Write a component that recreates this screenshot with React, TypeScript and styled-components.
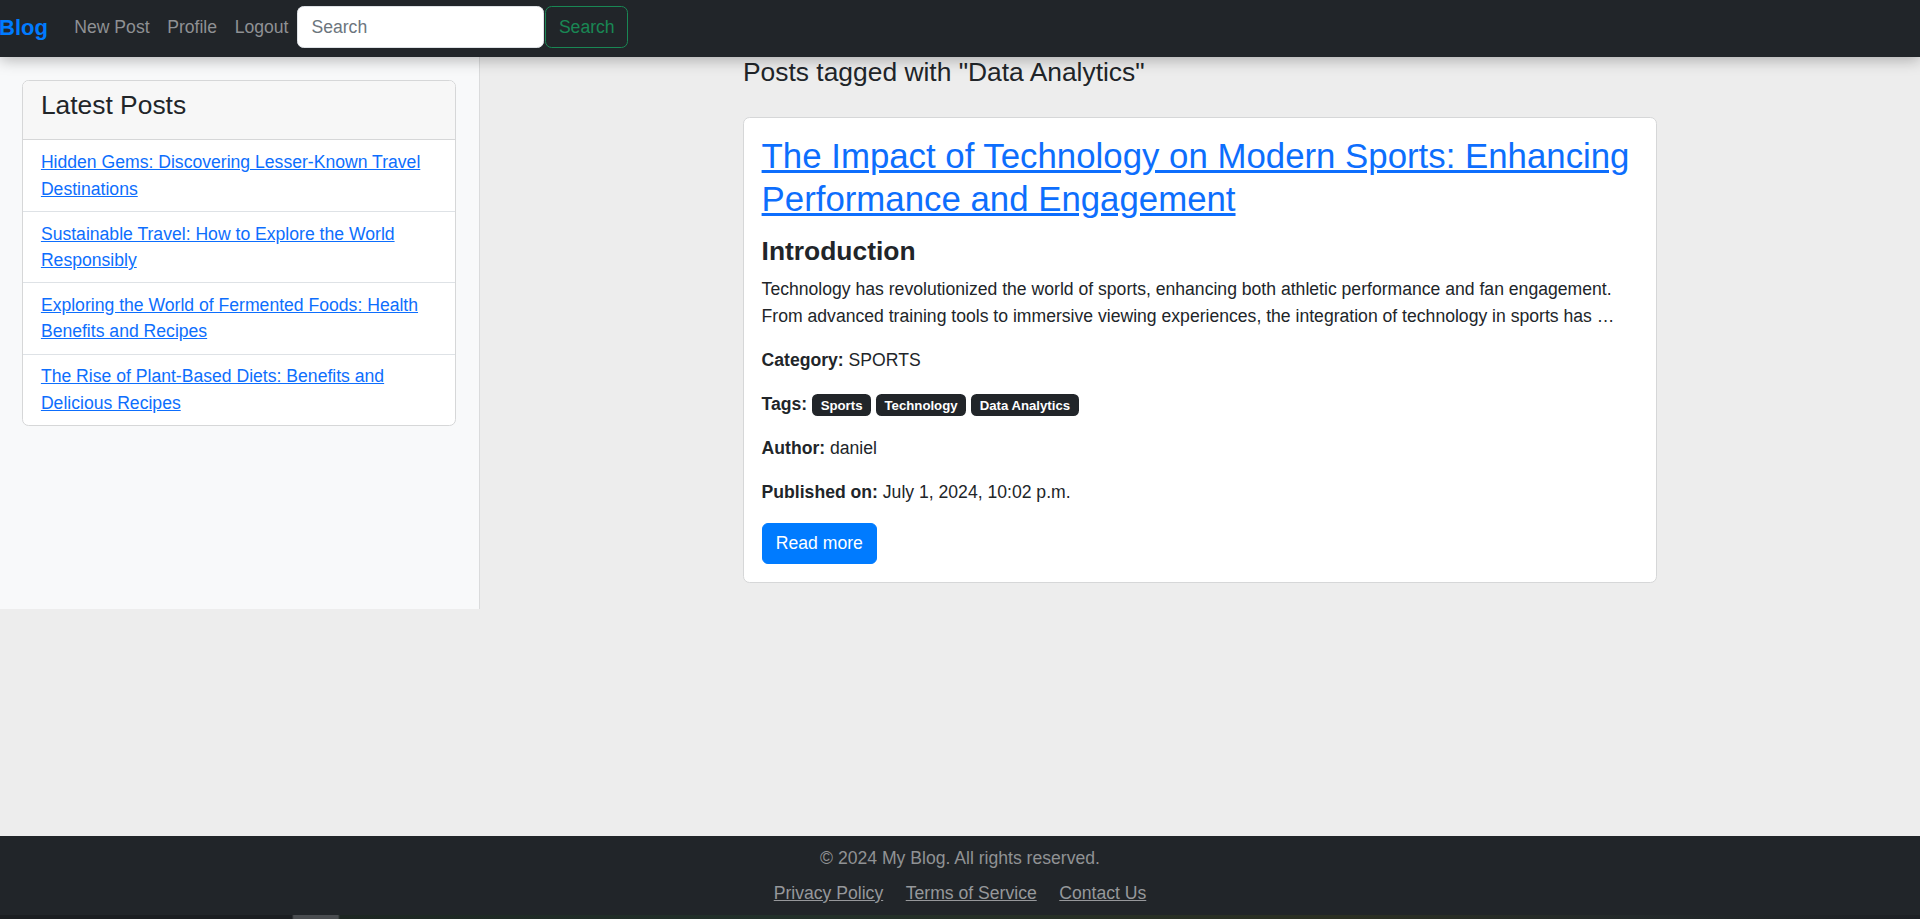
import React from "react";
import styled, { createGlobalStyle } from "styled-components";

const GlobalStyle = createGlobalStyle`
  html, body {
    margin: 0;
    padding: 0;
  }
  body {
    font-family: "Liberation Sans", Arial, sans-serif;
    font-size: 17.6px;
    line-height: 1.5;
    color: #212529;
    background: #ededed;
  }
  *, *::before, *::after { box-sizing: border-box; }
`;

const Page = styled.div`
  min-height: 100vh;
  display: flex;
  flex-direction: column;
`;

const Navbar = styled.nav`
  position: relative;
  z-index: 2;
  height: 57px;
  background: #212529;
  box-shadow: 0 3px 14px rgba(0, 0, 0, 0.28);
  display: flex;
  align-items: flex-start;
  padding: 6px 0 0 0;
`;

const NavInner = styled.div`
  height: 42px;
  display: flex;
  align-items: center;
`;

const Brand = styled.a`
  font-size: 22px;
  font-weight: 700;
  line-height: 33px;
  color: #007bff;
  text-decoration: none;
  margin-right: 17.6px;
  margin-left: -1px;
`;

const NavLink = styled.a`
  font-size: 17.6px;
  line-height: 26.4px;
  color: #8f9194;
  text-decoration: none;
  padding: 0 8.8px;
`;

const SearchForm = styled.form`
  display: flex;
  align-items: center;
  gap: 1px;
  margin: 0;
`;

const SearchInput = styled.input`
  width: 247px;
  height: 42px;
  padding: 6.6px 13.2px;
  font-family: inherit;
  font-size: 17.6px;
  color: #212529;
  background: #fff;
  border: 1px solid #dee2e6;
  border-radius: 6.6px;
  outline: none;
  &::placeholder { color: #6c757d; }
`;

const OutlineButton = styled.button`
  height: 42px;
  width: 83px;
  padding: 6.6px 12px;
  font-family: inherit;
  font-size: 17.6px;
  color: #198754;
  background: transparent;
  border: 1px solid #198754;
  border-radius: 6.6px;
`;

const Content = styled.div`
  flex: 1;
`;

const Row = styled.div`
  display: flex;
  align-items: stretch;
`;

const Sidebar = styled.aside`
  width: 480px;
  flex: 0 0 480px;
  background: #f8f9fa;
  border-right: 1px solid #dadbdc;
  padding: 23.3px 23px 0 22.3px;
`;

const Card = styled.div`
  background: #fff;
  border: 1px solid #d6d7d8;
  border-radius: 6.6px;
  overflow: hidden;
`;

const CardHeader = styled.div`
  background: #f7f7f7;
  border-bottom: 1px solid #d6d7d8;
  padding: 8.8px 17.6px;
`;

const SideTitle = styled.h4`
  margin: 0 0 8.8px;
  font-size: 26.4px;
  font-weight: 500;
  line-height: 1.2;
  color: #212529;
`;

const ListItem = styled.div<{ $last?: boolean }>`
  padding: 8.8px 17.6px;
  line-height: 26.4px;
  border-bottom: ${(p) => (p.$last ? "none" : "1px solid #dee2e6")};
`;

const Link = styled.a`
  color: #0d6efd;
  text-decoration: underline;
`;

const Main = styled.main`
  flex: 1;
  padding-bottom: 26px;
`;

const MainInner = styled.div`
  width: 914px;
  margin: 0 auto;
`;

const PageHeading = styled.h4`
  margin: 0 0 28px;
  font-size: 26.4px;
  font-weight: 400;
  line-height: 31.7px;
  color: #212529;
`;

const PostCard = styled.article`
  background: #fff;
  border: 1px solid #d6d7d8;
  border-radius: 6.6px;
  padding: 17.6px;
`;

const PostTitle = styled.h2`
  margin: 0 0 16px;
  font-size: 34.8px;
  font-weight: 400;
  line-height: 42.2px;
`;

const SectionTitle = styled.h4`
  margin: 0 0 8.8px;
  font-size: 26.4px;
  font-weight: 700;
  line-height: 1.2;
  color: #212529;
`;

const Para = styled.p`
  margin: 0 0 17.6px;
  line-height: 26.4px;
`;

const Label = styled.strong`
  font-weight: 700;
`;

const Badge = styled.span`
  display: inline-block;
  padding: 4.6px 8.6px;
  font-size: 13.2px;
  font-weight: 700;
  line-height: 1;
  color: #fff;
  background: #212529;
  border-radius: 5.5px;
  vertical-align: baseline;
`;

const PrimaryButton = styled.a`
  display: inline-block;
  padding: 6.6px 13.2px;
  font-size: 17.6px;
  line-height: 26.4px;
  color: #fff;
  background: #007bff;
  border: 1px solid #007bff;
  border-radius: 6px;
  text-decoration: none;
  vertical-align: top;
`;

const Footer = styled.footer`
  background: #212529;
  padding: 9px 0;
  text-align: center;
  color: #909294;
`;

const Copyright = styled.p`
  margin: 0 0 8px;
  line-height: 26.4px;
`;

const FooterLinks = styled.div`
  display: flex;
  justify-content: center;
  gap: 22.5px;
  line-height: 26.4px;
`;

const FooterLink = styled.a`
  color: #96989b;
  text-decoration: underline;
`;

const BottomStrip = styled.div`
  height: 4px;
  background: linear-gradient(
    90deg,
    #1b1e21 0%,
    #1b1e21 15.2%,
    #4a4d50 15.3%,
    #4a4d50 17.6%,
    #1d2622 17.7%,
    #22302a 40%,
    #2b2f22 70%,
    #23292a 85%,
    #1d2024 100%
  );
`;

const latest = [
  "Hidden Gems: Discovering Lesser-Known Travel Destinations",
  "Sustainable Travel: How to Explore the World Responsibly",
  "Exploring the World of Fermented Foods: Health Benefits and Recipes",
  "The Rise of Plant-Based Diets: Benefits and Delicious Recipes",
];

const tags = ["Sports", "Technology", "Data Analytics"];

export default function App() {
  return (
    <>
      <GlobalStyle />
      <Page>
        <Navbar>
          <NavInner>
            <Brand href="#">Blog</Brand>
            <NavLink href="#">New Post</NavLink>
            <NavLink href="#">Profile</NavLink>
            <NavLink href="#">Logout</NavLink>
            <SearchForm onSubmit={(e) => e.preventDefault()}>
              <SearchInput type="search" placeholder="Search" />
              <OutlineButton type="submit">Search</OutlineButton>
            </SearchForm>
          </NavInner>
        </Navbar>
        <Content>
          <Row>
            <Sidebar>
              <Card>
                <CardHeader>
                  <SideTitle>Latest Posts</SideTitle>
                </CardHeader>
                {latest.map((t, i) => (
                  <ListItem key={t} $last={i === latest.length - 1}>
                    <Link href="#">{t}</Link>
                  </ListItem>
                ))}
              </Card>
            </Sidebar>
            <Main>
              <MainInner>
                <PageHeading>Posts tagged with "Data Analytics"</PageHeading>
                <PostCard>
                  <PostTitle>
                    <Link href="#">
                      The Impact of Technology on Modern Sports: Enhancing Performance and Engagement
                    </Link>
                  </PostTitle>
                  <SectionTitle>Introduction</SectionTitle>
                  <Para>
                    Technology has revolutionized the world of sports, enhancing both athletic
                    performance and fan engagement. From advanced training tools to immersive
                    viewing experiences, the integration of technology in sports has …
                  </Para>
                  <Para>
                    <Label>Category:</Label> SPORTS
                  </Para>
                  <Para>
                    <Label>Tags:</Label>{" "}
                    {tags.map((t, i) => (
                      <React.Fragment key={t}>
                        <Badge>{t}</Badge>
                        {i < tags.length - 1 ? " " : ""}
                      </React.Fragment>
                    ))}
                  </Para>
                  <Para>
                    <Label>Author:</Label> daniel
                  </Para>
                  <Para>
                    <Label>Published on:</Label> July 1, 2024, 10:02 p.m.
                  </Para>
                  <PrimaryButton href="#">Read more</PrimaryButton>
                </PostCard>
              </MainInner>
            </Main>
          </Row>
        </Content>
        <Footer>
          <Copyright>© 2024 My Blog. All rights reserved.</Copyright>
          <FooterLinks>
            <FooterLink href="#">Privacy Policy</FooterLink>
            <FooterLink href="#">Terms of Service</FooterLink>
            <FooterLink href="#">Contact Us</FooterLink>
          </FooterLinks>
        </Footer>
        <BottomStrip />
      </Page>
    </>
  );
}
